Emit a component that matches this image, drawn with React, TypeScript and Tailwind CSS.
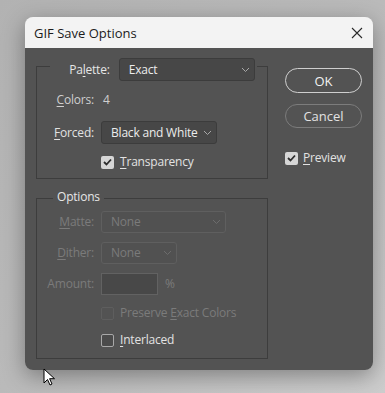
import React from 'react';

const font = { fontFamily: '"Open Sans", "Noto Sans", Arial, sans-serif' };

// mnemonic underline helper
const U: React.FC<{ children: React.ReactNode }> = ({ children }) => (
  <span className="underline underline-offset-[2px] decoration-1">{children}</span>
);

const Chevron: React.FC<{ dim?: boolean }> = ({ dim }) => (
  <svg width="9" height="6" viewBox="0 0 9 6" className="shrink-0">
    <polyline
      points="1,1 4.5,4.5 8,1"
      fill="none"
      stroke={dim ? '#6c6c6c' : '#a8a8a8'}
      strokeWidth="1"
    />
  </svg>
);

const Select: React.FC<{ value: string; width: string; disabled?: boolean; h?: string }> = ({
  value,
  width,
  disabled,
  h = 'h-[23px]',
}) => (
  <div
    className={`${width} ${h} flex items-center justify-between pl-[9px] pr-[4px] rounded-[3px] border ${
      disabled ? 'bg-[#515151] border-[#5f5f5f] text-[#7b7b7b]' : 'bg-[#474747] border-[#3c3c3c] text-[#ececec]'
    }`}
  >
    <span className="whitespace-nowrap">{value}</span>
    <Chevron dim={disabled} />
  </div>
);

const Checkbox: React.FC<{ checked?: boolean; disabled?: boolean }> = ({ checked, disabled }) => (
  <div
    className={`w-[13px] h-[13px] rounded-[2px] flex items-center justify-center shrink-0 ${
      checked
        ? 'bg-[#d6d6d6]'
        : disabled
        ? 'border border-[#5e5e5e] bg-[#535353]'
        : 'border border-[#a8a8a8] bg-[#4b4b4b]'
    }`}
  >
    {checked && (
      <svg width="9" height="8" viewBox="0 0 9 8">
        <polyline points="1,4 3.5,6.5 8,1.5" fill="none" stroke="#2e2e2e" strokeWidth="1.8" />
      </svg>
    )}
  </div>
);

const Label: React.FC<{ children: React.ReactNode; disabled?: boolean; color?: string }> = ({
  children,
  disabled,
  color,
}) => (
  <div className={`w-[57px] text-right ${disabled ? 'text-[#7b7b7b]' : color || 'text-[#e2e2e2]'}`}>
    {children}
  </div>
);

export default function App() {
  return (
    <div
      className="relative w-[385px] h-[393px] overflow-hidden bg-gradient-to-br from-[#b2b2b2] via-[#bababa] to-[#cdcdcd] pt-[17px] pl-[25px] text-[12px] leading-[16px] tracking-[-0.2px]"
      style={font}
    >
      <div className="w-[348px] h-[353px] rounded-[8px] overflow-hidden flex flex-col shadow-[0_6px_22px_rgba(0,0,0,0.35)]">
        {/* Title bar */}
        <div className="h-[31px] bg-[#f3f3f3] flex items-center justify-between pl-[9px] pr-[10px] text-[13px] tracking-normal text-[#1b1b1b]">
          <span>GIF Save Options</span>
          <svg width="12" height="12" viewBox="0 0 12 12">
            <path d="M1 1 L11 11 M11 1 L1 11" stroke="#2a2a2a" strokeWidth="1.1" />
          </svg>
        </div>

        {/* Body */}
        <div className="flex-1 bg-[#535353] flex pl-[11px] pt-[18px]">
          {/* Left column */}
          <div className="flex flex-col w-[232px]">
            {/* Palette group */}
            <div className="border border-[#3d3d3d] pb-[8px] flex flex-col">
              <div className="-mt-[9px] ml-[13px] mr-[10px] bg-[#535353] flex items-center gap-[9px] pr-[2px]">
                <div className="w-[60px] text-right text-[#e6e6e6]">
                  Pa<U>l</U>ette:
                </div>
                <Select value="Exact" width="w-[137px]" />
              </div>
              <div className="mt-[11px] flex items-center gap-[9px]">
                <Label color="text-[#cfcfcf]">
                  <U>C</U>olors:
                </Label>
                <span className="text-[#cfcfcf]">4</span>
              </div>
              <div className="mt-[13px] flex items-center gap-[7px]">
                <Label>
                  <U>F</U>orced:
                </Label>
                <Select value="Black and White" width="w-[116px]" />
              </div>
              <div className="mt-[10px] flex items-center gap-[6px] pl-[64px] text-[#e2e2e2]">
                <Checkbox checked />
                <span>
                  <U>T</U>ransparency
                </span>
              </div>
            </div>

            {/* Options group */}
            <div className="mt-[19px] border border-[#3d3d3d] pb-[10px] flex flex-col">
              <div className="-mt-[10px] ml-[16px] self-start bg-[#535353] px-[4px] text-[#e6e6e6]">Options</div>
              <div className="mt-[6px] flex items-center gap-[7px]">
                <Label disabled>
                  <U>M</U>atte:
                </Label>
                <Select value="None" width="w-[125px]" h="h-[22px]" disabled />
              </div>
              <div className="mt-[9px] flex items-center gap-[7px]">
                <Label disabled>
                  <U>D</U>ither:
                </Label>
                <Select value="None" width="w-[76px]" h="h-[22px]" disabled />
              </div>
              <div className="mt-[9px] flex items-center gap-[7px]">
                <Label disabled>Amount:</Label>
                <div className="w-[57px] h-[22px] bg-[#484848] border border-[#626262]" />
                <span className="text-[#7b7b7b]">%</span>
              </div>
              <div className="mt-[10px] flex items-center gap-[6px] pl-[64px] text-[#7b7b7b]">
                <Checkbox disabled />
                <span>
                  Preserve <U>E</U>xact Colors
                </span>
              </div>
              <div className="mt-[11px] flex items-center gap-[6px] pl-[64px] text-[#e2e2e2]">
                <Checkbox />
                <span>
                  <U>I</U>nterlaced
                </span>
              </div>
            </div>
          </div>

          {/* Right column */}
          <div className="ml-[17px] pt-[2px] flex flex-col w-[77px]">
            <button className="h-[25px] rounded-full border border-[#cfcfcf] text-[#f2f2f2] text-[13px] tracking-normal">
              OK
            </button>
            <button className="mt-[11px] h-[24px] rounded-full border border-[#7c7c7c] text-[#e2e2e2] text-[13px] tracking-normal">
              Cancel
            </button>
            <div className="mt-[22px] flex items-center gap-[5px] text-[#e2e2e2]">
              <Checkbox checked />
              <span>
                <U>P</U>review
              </span>
            </div>
          </div>
        </div>
      </div>

      {/* Mouse cursor */}
      <svg className="absolute left-[43px] top-[368px]" width="13" height="19" viewBox="0 0 13 19">
        <path
          d="M1 1 L1 15 L4.5 11.5 L7 17 L9 16 L6.6 10.7 L11.5 10.7 Z"
          fill="#fff"
          stroke="#000"
          strokeWidth="1"
          strokeLinejoin="round"
        />
      </svg>
    </div>
  );
}
